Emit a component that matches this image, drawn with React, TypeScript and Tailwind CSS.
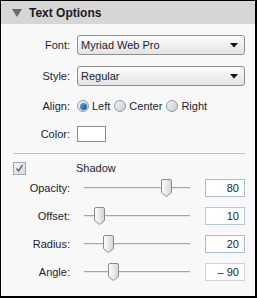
import React from "react";

const Label = ({ children }: { children: React.ReactNode }) => (
  <div className="w-[69px] shrink-0 text-right">{children}</div>
);

const Select = ({ value }: { value: string }) => (
  <div className="ml-[7px] flex h-[20px] w-[168px] items-center justify-between rounded-[3px] border border-[#8e8f8f] bg-gradient-to-b from-[#fdfdfd] to-[#e3e3e3] pl-[3px] pr-[6px]">
    <span>{value}</span>
    <svg width="8" height="5" viewBox="0 0 8 5">
      <path d="M0 0h8L4 4.5z" fill="#111" />
    </svg>
  </div>
);

const Radio = ({ checked, label }: { checked?: boolean; label: string }) => (
  <div className="flex items-center gap-[3px]">
    <span className="flex h-[12px] w-[12px] items-center justify-center rounded-full border border-[#8e9aa6] bg-gradient-to-br from-[#f4f4f4] to-[#c9cdd2]">
      {checked && (
        <span className="h-[7px] w-[7px] rounded-full bg-gradient-to-br from-[#5aa8e0] to-[#14508c]" />
      )}
    </span>
    <span>{label}</span>
  </div>
);

const Thumb = () => (
  <svg width="11" height="18" viewBox="0 0 11 18">
    <defs>
      <linearGradient id="tg" x1="0" y1="0" x2="1" y2="0">
        <stop offset="0" stopColor="#ffffff" />
        <stop offset="1" stopColor="#d4d4d4" />
      </linearGradient>
    </defs>
    <path
      d="M2 0.5h7a1.5 1.5 0 0 1 1.5 1.5v11.5L5.5 17.5 0.5 13.5V2A1.5 1.5 0 0 1 2 0.5z"
      fill="url(#tg)"
      stroke="#8a8a8a"
    />
  </svg>
);

const SliderRow = ({
  label,
  value,
  pos,
  box,
}: {
  label: string;
  value: string;
  pos: string;
  box: string;
}) => (
  <div className="flex h-[18px] items-center">
    <Label>{label}</Label>
    <div className="relative ml-[14px] h-[18px] w-[106px]">
      <div className="absolute left-0 right-0 top-[8px] h-[2px] border-t border-[#a7a7a7] bg-[#e6e6e6]" />
      <div className={`absolute top-0 ${pos}`}>
        <Thumb />
      </div>
    </div>
    <div className={`ml-[15px] flex h-[18px] w-[40px] items-center justify-end border bg-white pr-[5px] ${box}`}>
      {value}
    </div>
  </div>
);

export default function App() {
  return (
    <div
      className="h-[298px] w-[257px] border-b-2 border-l border-r-2 border-t border-black bg-[#f8f8f8] text-[11px] text-[#1c1c34]"
      style={{ fontFamily: '"Liberation Sans", Arial, sans-serif' }}
    >
      <div className="flex h-[23px] items-center gap-[7px] bg-[#d6d6d6] pl-[11px]">
        <svg width="10" height="8" viewBox="0 0 10 8">
          <path d="M0 0h10L5 8z" fill="#6b6b6b" />
        </svg>
        <span className="text-[12px] font-bold text-[#1a1a1a]">Text Options</span>
      </div>
      <div className="mt-[11px] flex flex-col">
        <div className="flex h-[20px] items-center">
          <Label>Font:</Label>
          <Select value="Myriad Web Pro" />
        </div>
        <div className="mt-[11px] flex h-[20px] items-center">
          <Label>Style:</Label>
          <Select value="Regular" />
        </div>
        <div className="mt-[10px] flex h-[20px] items-center">
          <Label>Align:</Label>
          <div className="ml-[7px] flex items-center gap-[4px]">
            <Radio checked label="Left" />
            <Radio label="Center" />
            <Radio label="Right" />
          </div>
        </div>
        <div className="mt-[8px] flex h-[20px] items-center">
          <Label>Color:</Label>
          <div className="ml-[7px] h-[16px] w-[29px] border border-[#8e8e8e] bg-white" />
        </div>
        <div className="ml-[12px] mt-[9px] h-px w-[232px] bg-[#c4c4c4]" />
        <div className="mt-[7px] flex h-[14px] items-center">
          <span className="ml-[12px] flex h-[13px] w-[13px] items-center justify-center border border-[#9ea6b2] bg-gradient-to-br from-[#f6f6f6] to-[#d5d8dc]">
            <svg width="9" height="9" viewBox="0 0 9 9">
              <path d="M1.5 4.5l2 2.5L7.5 1" fill="none" stroke="#5a6a98" strokeWidth="1.5" />
            </svg>
          </span>
          <span className="ml-[50px]">Shadow</span>
        </div>
        <div className="mt-[4px] flex flex-col gap-[10px]">
          <SliderRow label="Opacity:" value="80" pos="left-[77px]" box="border-[#a9c0d8]" />
          <SliderRow label="Offset:" value="10" pos="left-[10px]" box="border-[#b4c6da]" />
          <SliderRow label="Radius:" value="20" pos="left-[19px]" box="border-[#a9c0d8]" />
          <SliderRow label="Angle:" value="– 90" pos="left-[24px]" box="border-[#d0d2d8]" />
        </div>
      </div>
    </div>
  );
}
